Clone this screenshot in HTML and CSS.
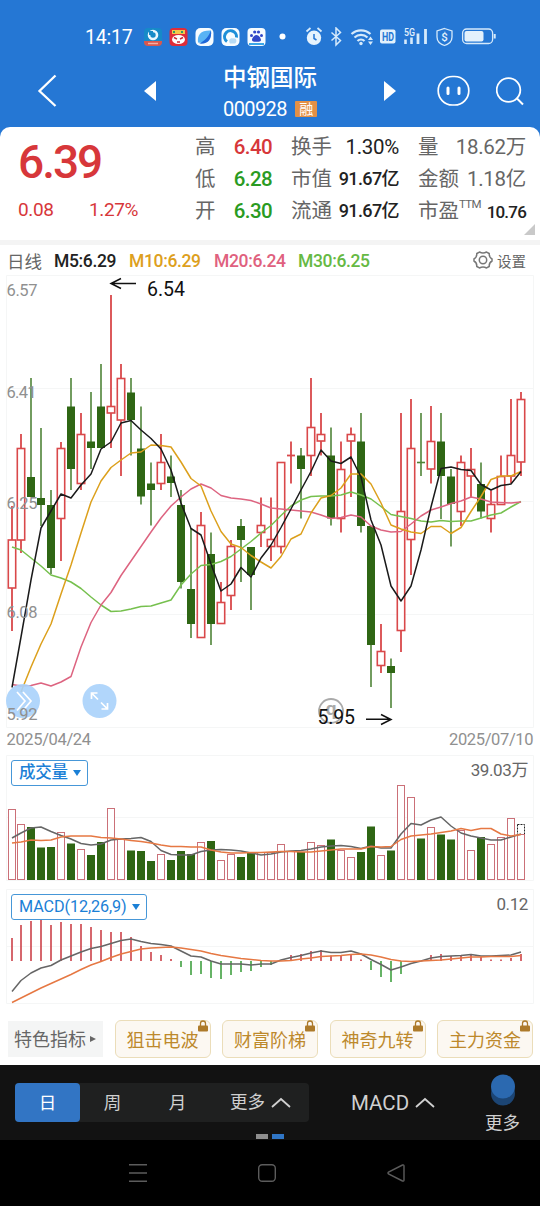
FILE: index.html
```html
<!DOCTYPE html>
<html lang="zh-CN">
<head>
    <meta charset="UTF-8">
    <meta name="viewport" content="width=device-width, initial-scale=1.0">
    <title>中钢国际 000928</title>
    <link rel="stylesheet" href="styles.css">
</head>
<body>

    <div class="top">
        <!-- Status bar -->
        <div class="status-bar">
            <span class="clock">14:17</span>
            <svg class="apps" width="146" height="20" viewBox="143 27 146 20">
                <rect x="144" y="28" width="18" height="18" rx="4" fill="#168ac8"/>
                <path d="M144 41h18v1a4 4 0 0 1-4 4h-10a4 4 0 0 1-4-4z" fill="#d8574f"/>
                <circle cx="153" cy="35" r="4" fill="none" stroke="#e9f7ff" stroke-width="2.6"/>
                <path d="M149 31h4v4h-4z" fill="#168ac8"/>
                <path d="M148 43.5h10" stroke="#f3b0a5" stroke-width="1.5"/>
                <rect x="169.5" y="28" width="18" height="18" rx="4" fill="#df2d38"/>
                <rect x="172" y="30" width="13" height="4" fill="#f5c64a"/>
                <path d="M174 31v2M182 31v2" stroke="#2f9c68" stroke-width="2"/>
                <ellipse cx="178.5" cy="39.5" rx="6.5" ry="4.5" fill="#fff"/>
                <path d="M174 37.5l3 1.5M183 37.5l-3 1.5M177 42h3" stroke="#c92a35" stroke-width="1.4"/>
                <rect x="195.5" y="28" width="18" height="18" rx="5" fill="#f7fcff"/>
                <path d="M198 42.500c-1-8 3-12.500 13-12 1 8-3 13.500-13 12z" fill="#58b4f5"/>
                <path d="M199 43.5c5-2 9.500-6.500 12-13 1 9-3 14-12 13z" fill="#1f67d8"/>
                <rect x="221.5" y="28" width="18" height="18" rx="5" fill="#f7fcff"/>
                <path d="M227 41.5a6 6 0 1 1 9.500-4" fill="none" stroke="#1d8fd8" stroke-width="3"/>
                <path d="M230 43.5c-2-3 0-6 3-5 3-1 5 3 2 5z" fill="#b7dbf5"/>
                <rect x="247.5" y="28" width="18" height="18" rx="4" fill="#f7fcff"/>
                <path d="M256.5 35c2 0 4.500 3 4.500 5s-3 1.800-4.500 1.800-4.500.2-4.500-1.800 2.500-5 4.500-5z" fill="#3048c8"/>
                <g fill="#3048c8"><circle cx="251.5" cy="35.5" r="1.5"/><circle cx="254.7" cy="32" r="1.6"/><circle cx="258.5" cy="32" r="1.6"/><circle cx="261.5" cy="35.5" r="1.5"/></g>
                <path d="M249 44h15" stroke="#3aa6e8" stroke-width="2"/>
                <circle cx="282.5" cy="36.5" r="3" fill="#fff"/>
            </svg>
            <svg class="system" width="192" height="20" viewBox="305 27 192 20">
                <g fill="none" stroke="#d6eafb">
                    <circle cx="314" cy="37.8" r="7.2" fill="#e6f3fd" stroke="none"/>
                    <path d="M306.500 31.500l4-3.500M321.500 31.500l-4-3.500" stroke-width="1.8"/>
                    <path d="M314 34v4.500l2.500 1.500" stroke="#2577d4" stroke-width="1.5"/>
                    <path d="M331.500 32.500l9 8-4.500 4.500v-17l4.500 4.500-9 8" stroke-width="1.5"/>
                    <path d="M351.500 34a14 14 0 0 1 19 0M354.500 37.500a9.500 9.500 0 0 1 13 0M357.500 41a5 5 0 0 1 7 0" stroke-width="2.2"/>
                    <circle cx="361" cy="43.5" r="1.7" fill="#d6eafb" stroke="none"/>
                    <path d="M370.500 36.500l2.500 3.500h-5zM370.500 45l2.500-3.500h-5z" fill="#d6eafb" stroke="none"/>
                    <rect x="380" y="29.5" width="15.5" height="14" rx="2" fill="#e3f1fc" stroke="none"/>
                    <path d="M405.500 39.500v4.500M411.500 37.500v6.500" stroke-width="2.6"/>
                    <path d="M418 33.500v10.500M425.500 29v15" stroke-width="2.8"/>
                    <path d="M444.500 28.500l7.500 2.500v6c0 4.500-3 7-7.500 8.500-4.500-1.500-7.500-4-7.500-8.500v-6z" stroke-width="1.3"/>
                    <rect x="462.6" y="29" width="30" height="14.5" rx="4" stroke-width="1.3"/>
                    <rect x="464.5" y="31" width="19" height="10.5" rx="2" fill="#e3f1fc" stroke="none"/>
                    <path d="M494.700 34v4.500" stroke-width="2"/>
                </g>
                <text class="t-hd" x="382" y="41" textLength="12" lengthAdjust="spacingAndGlyphs">HD</text>
                <text class="t-5g" x="404" y="35.5" textLength="11" lengthAdjust="spacingAndGlyphs">5G</text>
                <text class="t-shield" x="444.5" y="41" text-anchor="middle">$</text>
            </svg>
        </div>

        <!-- Title bar -->
        <div class="title-bar">
            <svg class="back" width="22" height="36" viewBox="36 72 22 36"><path d="M55.500 74.500L39.500 90l16 15" fill="none" stroke="#fff" stroke-width="2.3"/></svg>
            <svg class="prev" width="13" height="20" viewBox="0 0 13 20"><path d="M0 10L12 0v20z" fill="#fff"/></svg>
            <div class="stock">
                <div class="stock-name">中钢国际</div>
                <div class="stock-code"><span>000928</span><i>融</i></div>
            </div>
            <svg class="next" width="13" height="20" viewBox="0 0 13 20"><path d="M12 10L0 0v20z" fill="#fff"/></svg>
            <svg class="robot" width="34" height="32" viewBox="0 0 34 32">
                <rect x="1.2" y="1.5" width="30.600" height="28.5" rx="14.200" fill="none" stroke="#fff" stroke-width="1.7"/>
                <path d="M11 13v5.500M22 13v5.500" stroke="#fff" stroke-width="3" stroke-linecap="round"/>
            </svg>
            <svg class="search" width="30" height="30" viewBox="0 0 30 30"><circle cx="12.500" cy="13" r="11.800" fill="none" stroke="#fff" stroke-width="1.8"/><path d="M20.500 21l6.500 6.500" stroke="#fff" stroke-width="2"/></svg>
        </div>

        <!-- Quote panel -->
        <div class="quote">
            <div class="price">
                <div class="price-now">6.39</div>
                <div class="price-change"><span>0.08</span><span>1.27%</span></div>
            </div>
            <div class="stats">
                <span>高</span><b class="up">6.40</b><span>换手</span><b class="dark">1.30%</b><span>量</span><b>18.62万</b>
                <span>低</span><b class="down">6.28</b><span>市值</span><b class="dark small">91.67亿</b><span>金额</span><b>1.18亿</b>
                <span>开</span><b class="down">6.30</b><span>流通</span><b class="dark small">91.67亿</b><span>市盈<sup>TTM</sup></span><b class="dark pe">10.76</b>
            </div>
            <div class="corner"></div>
        </div>
    </div>

    <div class="ma-row">
        <span class="period">日线</span>
        <b class="m5">M5:6.29</b>
        <b class="m10">M10:6.29</b>
        <b class="m20">M20:6.24</b>
        <b class="m30">M30:6.25</b>
        <div class="settings">
            <svg width="20" height="20" viewBox="0 0 20 20" fill="none" stroke="#777" stroke-width="1.5">
                <path d="M6.500 2Q10 4 13.500 2L16.200 3.500Q16 7.300 19 9v2Q16 12.700 16.200 16.500l-2.700 1.500Q10 16 6.500 18L3.800 16.500Q4 12.700 1 11V9Q4 7.300 3.800 3.500z"/>
                <circle cx="10" cy="10" r="3.700"/>
            </svg>
            <span>设置</span>
        </div>
    </div>

    <!-- K line -->
    <svg class="kline" id="kline" width="540" height="477" viewBox="0 275 540 477">
        <path class="grid" d="M6.500 275.500H533.500V727.500H6.500zM6.500 388.500H533.500M6.500 501.500H533.500M6.500 614.500H533.500"/>
        <g id="candles"></g>
        <g id="averages"></g>
        <g class="round-btn">
            <circle cx="23" cy="701" r="17"/>
            <path d="M17 692l8 9-8 9.500M23 692l8 9-8 9.500"/>
            <circle cx="99.500" cy="701" r="17"/>
            <path d="M98 699.500l-6.500-6.500m0 6v-6h6M101 702.500l6.500 6.500m0-6v6h-6"/>
        </g>
        <g class="scale">
            <text x="6.500" y="296" textLength="31">6.57</text>
            <text x="6.500" y="398" textLength="30">6.41</text>
            <text x="6.500" y="508.500" textLength="31">6.25</text>
            <text x="6.500" y="618" textLength="31">6.08</text>
            <text x="6.500" y="719.500" textLength="31">5.92</text>
            <text x="6.500" y="744.500" textLength="84.500">2025/04/24</text>
            <text x="449" y="744.500" textLength="84.500">2025/07/10</text>
        </g>
        <g class="logo-mark"><circle cx="331" cy="711" r="12"/><text x="331" y="714.500" text-anchor="middle">q</text></g>
        <g class="extremes">
            <text x="147" y="295.500" textLength="38">6.54</text>
            <path d="M136 283.500H112M121 278.500l-10 5 10 5"/>
            <text x="317.500" y="724" textLength="37.500">5.95</text>
            <path d="M366 719.300H390M381 714.500l10 5-10 5"/>
        </g>
    </svg>

    <!-- Volume -->
    <div class="panel volume">
        <svg id="volume" width="540" height="127" viewBox="0 755 540 127">
            <path class="grid" d="M6.500 755.500H533.500V880.500H6.500zM6.500 817.500H533.500"/>
        </svg>
        <div class="picker">成交量<i></i></div>
        <div class="panel-value">39.03万</div>
    </div>

    <!-- MACD -->
    <div class="panel macd">
        <svg id="macd" width="540" height="116" viewBox="0 889 540 116">
            <path class="grid" d="M6.500 889.500H533.500V1003.500H6.500zM6.500 946.500H533.500"/>
        </svg>
        <div class="picker">MACD(12,26,9)<i></i></div>
        <div class="panel-value">0.12</div>
    </div>

    <div class="chips">
        <div class="chip-title">特色指标<i></i></div>
        <div class="chip">狙击电波<svg class="lock" width="10" height="12" viewBox="0 0 10 12"><path d="M2.500 6V3.500a2.500 2.500 0 0 1 5 0V6" fill="none" stroke="#ad7a2a" stroke-width="1.3"/><rect y="5.5" width="10" height="6" rx="1" fill="#ad7a2a"/></svg></div>
        <div class="chip">财富阶梯<svg class="lock" width="10" height="12" viewBox="0 0 10 12"><path d="M2.500 6V3.500a2.500 2.500 0 0 1 5 0V6" fill="none" stroke="#ad7a2a" stroke-width="1.3"/><rect y="5.5" width="10" height="6" rx="1" fill="#ad7a2a"/></svg></div>
        <div class="chip">神奇九转<svg class="lock" width="10" height="12" viewBox="0 0 10 12"><path d="M2.500 6V3.500a2.500 2.500 0 0 1 5 0V6" fill="none" stroke="#ad7a2a" stroke-width="1.3"/><rect y="5.5" width="10" height="6" rx="1" fill="#ad7a2a"/></svg></div>
        <div class="chip">主力资金<svg class="lock" width="10" height="12" viewBox="0 0 10 12"><path d="M2.500 6V3.500a2.500 2.500 0 0 1 5 0V6" fill="none" stroke="#ad7a2a" stroke-width="1.3"/><rect y="5.5" width="10" height="6" rx="1" fill="#ad7a2a"/></svg></div>
    </div>

    <div class="toolbar">
        <div class="tabs">
            <span class="active">日</span>
            <span>周</span>
            <span>月</span>
            <span class="wide">更多<svg width="20" height="11" viewBox="0 0 20 11"><path d="M1 10l9-8 9 8" fill="none" stroke="#d0d0d0" stroke-width="1.8"/></svg></span>
        </div>
        <div class="indicator">MACD<svg width="20" height="11" viewBox="0 0 20 11"><path d="M1 10l9-8 9 8" fill="none" stroke="#d0d0d0" stroke-width="1.8"/></svg></div>
        <div class="more">
            <svg width="24" height="32" viewBox="0 0 24 32"><circle cx="12" cy="19.500" r="12" fill="#1c4574"/><circle cx="12" cy="12.500" r="12" fill="#2b69b0"/></svg>
            <span>更多</span>
        </div>
        <div class="pager"><i></i><i class="on"></i></div>
    </div>

    <div class="nav-bar">
        <svg width="18" height="18" viewBox="0 0 18 18"><path d="M0 .8h18M0 9h18M0 17.200h18"/></svg>
        <svg width="18" height="18" viewBox="0 0 18 18"><rect x=".7" y=".7" width="16.600" height="16.600" rx="3.5"/></svg>
        <svg width="18" height="18" viewBox="0 0 18 18"><path d="M15.500 1q1.500-.5 1.500 1v14q0 1.500-1.500 1L1.500 10q-1-1 0-2z"/></svg>
    </div>

    <script src="chart.js"></script>
</body>
</html>
```

FILE: styles.css
```css
body {
    margin: 0;
    width: 540px;
    height: 1206px;
    overflow: hidden;
    background: #fff;
    font-family: Roboto, "Noto Sans CJK SC", sans-serif;
    color: #666;
}
i {
    font-style: normal;
}
svg {
    display: block;
    flex: none;
}
.top {
    background: #2577d4;
    height: 240px;
}

/* Status bar */
.status-bar {
    height: 20px;
    padding: 27px 0 13px 85px;
    display: flex;
    align-items: center;
}
.clock {
    width: 58px;
    color: #fff;
    font-size: 19.5px;
    letter-spacing: -0.2px;
}
.system {
    margin-left: 16px;
}
.t-hd {
    font-size: 12px;
    font-weight: 700;
    fill: #2577d4;
}
.t-5g {
    font-size: 10px;
    font-weight: 500;
    fill: #e3f1fc;
}
.t-shield {
    font-size: 11.5px;
    font-weight: 500;
    fill: #e3f1fc;
}

/* Title bar */
.title-bar {
    height: 67px;
    display: flex;
    align-items: center;
    color: #fff;
}
.back {
    margin: -6px 0 0 36px;
}
.prev {
    margin: -6px 0 0 86px;
}
.stock {
    width: 94px;
    margin: -2px 0 0 66px;
}
.stock-name {
    font-size: 23.5px;
    line-height: 32px;
    font-weight: 500;
    white-space: nowrap;
}
.stock-code {
    display: flex;
    align-items: center;
    justify-content: space-between;
    font-size: 20px;
    line-height: 30px;
    letter-spacing: -0.6px;
}
.stock-code i {
    width: 22px;
    height: 16px;
    line-height: 16px;
    font-size: 14px;
    text-align: center;
    background: #e39046;
    border-radius: 1px;
}
.next {
    margin: -6px 0 0 67px;
}
.robot {
    margin: -6px 0 0 40px;
}
.search {
    margin: -4px 0 0 25px;
}

/* Quote */
.quote {
    position: relative;
    height: 113px;
    background: #fff;
    border-radius: 10px 10px 0 0;
    display: flex;
}
.price {
    width: 195px;
    color: #d7373a;
}
.price-now {
    margin: 12px 0 0 18px;
    font-size: 46px;
    line-height: 46px;
    font-weight: 500;
    letter-spacing: -2px;
}
.price-change {
    display: flex;
    margin: 14px 0 0 18px;
    font-size: 19px;
    line-height: 22px;
    letter-spacing: -0.4px;
}
.price-change span {
    width: 71px;
}
.stats {
    display: grid;
    grid-template-columns: 38px 39px 19px 42px 66px 19px 44px 64px;
    grid-template-rows: repeat(3, 32px);
    padding-top: 4px;
    line-height: 32px;
    font-size: 20.5px;
    white-space: nowrap;
}
.stats > :nth-child(6n + 3) {
    grid-column: 4;
}
.stats > :nth-child(6n + 4) {
    grid-column: 5;
}
.stats > :nth-child(6n + 5) {
    grid-column: 7;
}
.stats > :nth-child(6n) {
    grid-column: 8;
}
.stats b {
    font-weight: 400;
    letter-spacing: -0.3px;
    justify-self: end;
}
.stats .up {
    color: #d7373a;
    font-weight: 500;
    letter-spacing: -0.6px;
}
.stats .down {
    color: #2a9b22;
    font-weight: 500;
    letter-spacing: -0.6px;
}
.stats .dark {
    color: #222;
}
.stats .small {
    font-size: 18px;
    font-weight: 500;
    letter-spacing: -0.6px;
}
.stats .pe {
    font-size: 17px;
    font-weight: 500;
    letter-spacing: -0.8px;
    padding-top: 1px;
}
sup {
    font-size: 11.5px;
    line-height: 0;
    letter-spacing: -0.7px;
    vertical-align: 10px;
}
.corner {
    position: absolute;
    right: 5px;
    bottom: 5px;
    border-left: 11px solid transparent;
    border-bottom: 11px solid #c9c9c9;
}

/* Moving averages */
.ma-row {
    height: 30px;
    border-top: 5px solid #f4f4f4;
    display: flex;
    align-items: center;
    padding-left: 7px;
    font-size: 17.5px;
    white-space: nowrap;
}
.ma-row b {
    padding-top: 1px;
    font-weight: 500;
    letter-spacing: -0.35px;
}
.period {
    width: 47px;
}
.m5 {
    width: 75px;
    color: #222;
}
.m10 {
    width: 85px;
    color: #dda01e;
}
.m20 {
    width: 84px;
    color: #e0617e;
}
.m30 {
    color: #66b944;
}
.settings {
    margin: 0 14px 0 auto;
    display: flex;
    align-items: center;
    gap: 4px;
    font-size: 14.5px;
}

/* Charts */
.grid {
    fill: none;
    stroke: #f5f6f6;
}
.round-btn circle {
    fill: #a9d1fb;
    opacity: 0.9;
}
.round-btn path {
    fill: none;
    stroke: #fff;
    stroke-width: 1.7;
}
.scale {
    font-size: 16.5px;
    fill: #909090;
}
.extremes {
    font-size: 19.5px;
    fill: #111;
}
.extremes path {
    fill: none;
    stroke: #111;
    stroke-width: 1.5;
}
.logo-mark circle {
    fill: none;
    stroke: #aaa;
    stroke-width: 1.8;
}
.logo-mark text {
    font-size: 19px;
    font-weight: 700;
    fill: #aaa;
}
.line {
    fill: none;
    stroke-width: 1.5;
    stroke-linejoin: round;
}
.wick-up {
    stroke: #d9484a;
    stroke-width: 1.8;
}
.wick-down {
    stroke: #4f8438;
    stroke-width: 1.6;
}
.body-up {
    fill: #fff;
    stroke: #d9484a;
    stroke-width: 1.6;
}
.body-down {
    fill: #2f6614;
}
.vol-up {
    fill: #fff;
    stroke: #cb7078;
    stroke-width: 1;
}
.vol-forecast {
    fill: #fff;
    stroke: #222;
    stroke-dasharray: 2 1;
}
.macd-up {
    stroke: #c9353c;
    stroke-width: 1.5;
}
.macd-down {
    stroke: #339a33;
    stroke-width: 1.5;
}
.panel {
    position: relative;
}
.volume {
    margin-top: 3px;
    height: 134px;
}
.macd {
    height: 116px;
}
.picker {
    position: absolute;
    left: 11px;
    top: 5px;
    height: 24px;
    line-height: 26px;
    padding: 0 6px 0 7px;
    display: flex;
    align-items: center;
    gap: 5px;
    border: 1px solid #4697d8;
    border-radius: 3px;
    background: #fff;
    color: #1b80d6;
    font-size: 16.5px;
    font-weight: 500;
    letter-spacing: -0.2px;
}
.macd .picker {
    font-size: 16.2px;
    font-weight: 400;
    letter-spacing: -0.1px;
}
.picker i {
    border: 4px solid transparent;
    border-top: 6px solid #1b80d6;
    border-bottom: 0;
}
.panel-value {
    position: absolute;
    right: 12px;
    top: 5px;
    font-size: 17px;
    line-height: 21px;
    letter-spacing: -0.4px;
}

/* Feature chips */
.chips {
    display: flex;
    justify-content: space-between;
    align-items: center;
    height: 38px;
    padding: 15px 7px 7px 8px;
    font-size: 18px;
    white-space: nowrap;
}
.chip-title {
    width: 89px;
    height: 36px;
    line-height: 37px;
    padding-left: 6px;
    background: #f4f5f5;
    display: flex;
    align-items: center;
    gap: 4px;
}
.chip-title i {
    border: 3.5px solid transparent;
    border-left: 6px solid #666;
    border-right: 0;
}
.chip {
    position: relative;
    width: 94px;
    height: 36px;
    line-height: 39px;
    text-align: center;
    border: 1px solid #ebddb9;
    border-radius: 6px;
    background: #fcf8f2;
    color: #bd892c;
}
.lock {
    position: absolute;
    right: 2px;
    top: -1px;
}

/* Bottom toolbar */
.toolbar {
    position: relative;
    height: 75px;
    background: #121212;
    color: #d0d0d0;
    font-size: 17.5px;
    display: flex;
}
.tabs {
    display: flex;
    width: 294px;
    height: 39px;
    line-height: 41px;
    margin: 18px 0 0 15px;
    background: #1f2020;
    border-radius: 4px;
}
.tabs span {
    width: 65px;
    text-align: center;
}
.tabs .active {
    background: #3275c4;
    color: #fff;
    border-radius: 4px;
}
.tabs .wide {
    width: 99px;
    display: flex;
    align-items: center;
    gap: 6px;
    padding-left: 20px;
    box-sizing: border-box;
}
.indicator {
    display: flex;
    align-items: center;
    gap: 6px;
    height: 39px;
    margin: 18px 0 0 42px;
    width: 134px;
    font-size: 20.5px;
}
.more {
    width: 35px;
    display: flex;
    flex-direction: column;
    align-items: center;
    padding-top: 9px;
    line-height: 34px;
    white-space: nowrap;
}
.pager {
    position: absolute;
    left: 256px;
    bottom: 1px;
    display: flex;
    gap: 4px;
}
.pager i {
    width: 12px;
    height: 5px;
    background: #8e8e8e;
}
.pager .on {
    background: #3076c6;
}
.nav-bar {
    height: 66px;
    background: #000;
    display: flex;
    align-items: center;
    justify-content: center;
    gap: 111px;
}
.nav-bar svg {
    fill: none;
    stroke: #5c5c5c;
    stroke-width: 1.4;
}
.nav-bar svg:first-child {
    margin-left: -6px;
}
```

FILE: chart.js
```javascript
const NS = 'http://www.w3.org/2000/svg';

// [high, body top, body bottom, low, rising]
const candles = [
    [506, 540, 588, 631, 1], [434, 448.5, 540, 553, 1], [378, 477, 497, 497, 0], [428, 498, 505, 526, 0],
    [490, 505, 568, 574, 0], [442, 448.5, 518.5, 561, 1], [378, 406.5, 469, 490, 0], [413, 434.5, 483.5, 490, 1],
    [392, 441.5, 448, 469, 0], [364, 406.5, 448, 448, 0], [295, 406.5, 413, 448, 1], [364, 378.5, 420, 476, 1],
    [378, 392.5, 420, 455.5, 0], [406.5, 448.5, 496.5, 504.5, 0], [462.5, 483.5, 490, 525.5, 0], [434, 462.5, 483.5, 490, 1],
    [455.5, 476.5, 483, 497, 0], [490, 505, 582, 588.5, 0], [528, 589, 624, 638, 0], [512, 525.5, 637.5, 638, 1],
    [532.5, 554, 624, 645, 0], [582, 602.5, 623.5, 624, 1], [540, 546.5, 595.5, 610, 1], [519, 526, 540, 582, 0],
    [547, 547, 575, 610, 0], [497.5, 525.5, 532.5, 547, 1], [497.5, 539.5, 546.5, 561, 1], [462, 462.5, 546.5, 553.5, 1],
    [441.5, 455.5, 455.5, 483.5, 1], [448, 455.5, 469, 518.5, 0], [378, 427.5, 455.5, 476, 1], [413, 434.5, 441, 455.5, 1],
    [427.5, 455.5, 518.5, 525.5, 0], [441.5, 469.5, 518.5, 532.5, 1], [427.5, 434.5, 441, 497, 1], [413, 441.5, 526, 532.5, 0],
    [526, 526, 645, 687, 0], [624, 651.5, 665.5, 673, 1], [658.5, 666, 673, 708, 0], [413, 511.5, 630.5, 652, 1],
    [399, 448.5, 539.5, 575, 1], [413, 462.5, 462.5, 476, 0], [406, 441.5, 469, 483.5, 1], [413, 441.5, 476, 519, 0],
    [469, 476.5, 504, 546.5, 0], [455.5, 462.5, 511.5, 526, 1], [448, 469.5, 476, 497, 1], [462.5, 484, 511.5, 518.5, 0],
    [490.5, 504.5, 518.5, 532.5, 1], [455.5, 476.5, 504.5, 505, 1], [399, 455.5, 476, 483.5, 1], [392, 399.5, 462, 476, 1]
];

const m5 = [687.5, 637, 580, 528, 511, 494, 498, 485, 474, 449, 442, 423, 420.5, 430, 438.5, 449, 470, 503, 528.5, 535, 564, 591, 584, 567.5, 577, 558, 545, 527.5, 509, 490, 471.5, 450, 461, 463.5, 457, 477, 520, 545, 586, 601, 586, 550, 507, 468.5, 467, 469.5, 470.5, 484.5, 490, 485.5, 484, 471.5];
const m10 = [null, 692, 667, 644, 624, 594, 565, 533, 502, 481, 467.5, 460, 453, 452, 445, 445.5, 447, 462, 478.5, 486, 511, 531.5, 544, 547.5, 555.5, 562, 568, 556.5, 539, 534, 513, 498, 495.5, 488, 474, 474, 484, 503, 525, 529, 532, 533.5, 526.5, 526.5, 533.5, 527.5, 511.5, 496.5, 479.5, 476, 476, 471.5];
const m20 = [684.5, 686, 685.5, 683, 686, 682, 676.5, 647, 622.5, 605, 592.5, 575.5, 561, 546.5, 532, 518, 506, 497, 489, 484, 488, 495.5, 498, 499, 500.5, 504, 508, 509, 510, 511, 512, 515, 518.5, 517.5, 515, 517, 526, 530, 532, 531.5, 524, 516, 510, 507, 503.5, 501, 497, 499, 502, 502.5, 503, 502];
const m30 = [547, 550, 558, 566, 575, 578, 582, 588.5, 597, 605, 611.5, 611, 609, 606.5, 606, 603, 600, 585, 574, 565.5, 564.5, 561.5, 556.5, 549, 541.5, 533, 525.5, 515.5, 506, 500, 496.5, 496, 496, 495, 492, 495, 499, 506.5, 514.5, 516.5, 518.5, 521, 522, 520.5, 521.5, 521, 521, 518, 515, 513, 507, 501.5];

const volumes = [809.5, 824.5, 827, 847.5, 847, 832.5, 843.5, 849.5, 855, 842, 808.5, 839.5, 850.5, 851, 861, 854.5, 860, 851, 854, 842.5, 841, 860.5, 854.5, 857, 853, 852.5, 852.5, 844.5, 851.5, 852, 842.5, 845.5, 839.5, 850.5, 857.5, 852, 826.5, 855.5, 850.5, 785.5, 797.5, 838.5, 827.5, 834.5, 839.5, 830.5, 850.5, 837, 844.5, 837.5, 818.5, 834.5];
const volGreen = [2, 3, 4, 6, 8, 9, 12, 13, 14, 16, 17, 18, 20, 23, 24, 29, 32, 35, 36, 38, 41, 43, 44, 47];
const vol5 = [838, 833, 828, 827, 831.5, 835.5, 839, 843.5, 845, 844, 840, 839, 838.5, 837.5, 841.5, 850.5, 854.5, 855, 855, 851.5, 850, 849.5, 850, 851, 853, 855, 854, 852, 851, 850.5, 849, 847, 846, 845.5, 846.5, 848.5, 846, 848, 848, 834, 823.5, 825, 820, 817, 826, 833, 836, 838, 840, 840, 837, 834];
const vol10 = [843, 842, 840, 840.5, 840, 837, 836, 836, 836, 837.5, 838, 839, 840.5, 841.5, 843, 845, 846.5, 846.5, 847, 847, 850, 852, 853, 853, 852.5, 852.5, 852, 851.5, 851.5, 852, 852, 851, 850, 849, 849, 849, 846.5, 847, 846.5, 839.5, 836, 835, 834, 832.5, 831, 828.5, 830.5, 828.5, 828.5, 834, 836, 834.5];

const ZERO = 961;
const hist = [938, 925, 921, 920, 925, 922, 924, 924, 927, 930, 932, 932, 937, 946, 952, 955, 959, 967, 975, 974, 978, 979, 975, 972, 971, 967, 965, 961, 955, 954, 951, 950, 955.5, 955.5, 955, 959.5, 970, 977, 982, 974, 961, 961, 955, 954, 956, 956, 955, 957, 959.5, 959.5, 958, 954];
const dif = [991.5, 980.5, 973, 968, 965.5, 960, 956, 952, 948.5, 946.5, 943.5, 940.5, 939, 941.5, 943.5, 944.5, 946, 951, 956, 957, 961, 964, 964, 964, 965, 964, 964, 960, 957.5, 955.5, 953, 951, 952.5, 952.5, 951, 954, 959.5, 964.5, 970, 967, 963.5, 961, 958, 956.5, 956, 955.5, 954.5, 956, 956, 955.5, 955, 952];
const dea = [1002.5, 998, 993, 988, 983.5, 979, 974.5, 969.5, 965, 961.5, 957.5, 954, 951.5, 949, 948, 947.5, 947, 948, 949.5, 951, 953.5, 955.5, 957, 958.5, 959.5, 960.5, 961, 961, 960.5, 959, 958, 956.5, 956, 955.5, 954.5, 954, 955, 957, 959.5, 961, 961.5, 961, 960.5, 960, 959, 958, 957, 957, 956.5, 956.5, 956.5, 955.5];

function x(i) {
    return i === 0 ? 12 : 11 + i * 10;
}

function add(parent, tag, attrs) {
    const el = document.createElementNS(NS, tag);
    for (const key in attrs) {
        el.setAttribute(key, attrs[key]);
    }
    parent.appendChild(el);
}

function addLine(parent, values, color) {
    const points = values.map((v, i) => v === null ? '' : x(i) + ',' + v).join(' ').trim();
    add(parent, 'polyline', { points: points, class: 'line', stroke: color });
}

function drawCandles() {
    const g = document.getElementById('candles');
    candles.forEach(([high, top, bottom, low, up], i) => {
        add(g, 'path', { d: `M${x(i)} ${high}V${low}`, class: up ? 'wick-up' : 'wick-down' });
        if (top === bottom) {
            add(g, 'path', { d: `M${x(i) - 4} ${top}h8`, class: up ? 'wick-up' : 'wick-down' });
        } else if (up) {
            add(g, 'rect', { x: x(i) - 3.7, y: top, width: 7.4, height: bottom - top, class: 'body-up' });
        } else {
            add(g, 'rect', { x: x(i) - 4, y: top, width: 8, height: bottom - top, class: 'body-down' });
        }
    });
    const lines = document.getElementById('averages');
    addLine(lines, m30, '#76c04e');
    addLine(lines, m20, '#dd6480');
    addLine(lines, m10, '#dca01c');
    addLine(lines, m5, '#1a1a1a');
}

function drawVolume() {
    const svg = document.getElementById('volume');
    add(svg, 'rect', { x: 517.5, y: 824.5, width: 7, height: 12, class: 'vol-forecast' });
    volumes.forEach((top, i) => {
        if (volGreen.includes(i)) {
            add(svg, 'rect', { x: x(i) - 4, y: top, width: 8, height: 880 - top, class: 'body-down' });
        } else {
            add(svg, 'rect', { x: x(i) - 3.5, y: top, width: 7, height: 879.5 - top, class: 'vol-up' });
        }
    });
    addLine(svg, vol5, '#666');
    addLine(svg, vol10, '#e67843');
}

function drawMacd() {
    const svg = document.getElementById('macd');
    hist.forEach((v, i) => {
        add(svg, 'path', { d: `M${x(i)} ${ZERO}V${v}`, class: v < ZERO ? 'macd-up' : 'macd-down' });
    });
    addLine(svg, dif, '#666');
    addLine(svg, dea, '#e67843');
}

drawCandles();
drawVolume();
drawMacd();
```
